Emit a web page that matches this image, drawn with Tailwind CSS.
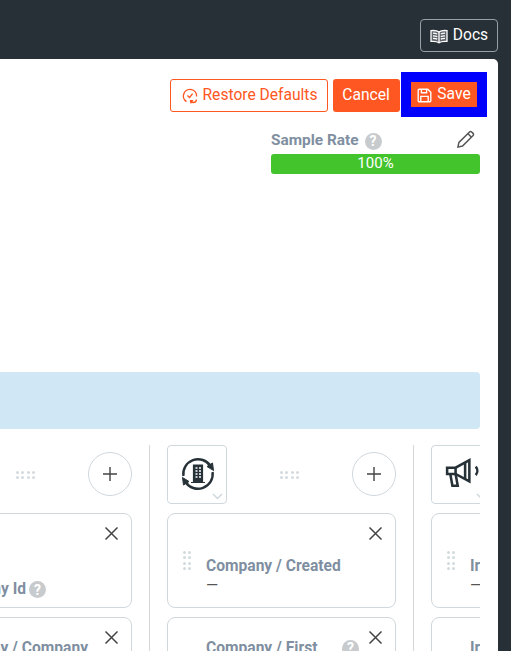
<!DOCTYPE html>
<html lang="en">

<head>
    <meta charset="UTF-8">
    <meta name="viewport" content="width=device-width, initial-scale=1.0">
    <title>Restore Defaults</title>
    <script src="https://cdn.jsdelivr.net/npm/@tailwindcss/browser@4"></script>
</head>

<body class="bg-[#272f37] h-[651px] overflow-hidden font-['Roboto',sans-serif]">
    <!-- top bar -->
    <header class="h-[59px] flex justify-end items-start pt-[19px] pr-[13px]">
        <button class="w-[78px] h-[33px] pt-[1px] border border-[#9a9fa4] rounded-[4px] text-white text-[15.6px] flex items-center justify-center gap-[5px]">
            <svg width="18" height="15" viewBox="0 0 18 15" fill="none" stroke="white" stroke-width="1.3">
                <path d="M9 3C7.5 1.8 4.5 1.3 1 1.6V12.4C4.5 12.1 7.5 12.6 9 13.8C10.5 12.6 13.5 12.1 17 12.4V1.6C13.5 1.3 10.5 1.8 9 3Z" fill="white" fill-opacity=".25"/>
                <path d="M9 3V13.8M3 4.2C4.5 4.2 6 4.4 7.2 5M3 6.8C4.5 6.8 6 7 7.2 7.6M3 9.4C4.5 9.4 6 9.6 7.2 10.2M15 4.2C13.5 4.2 12 4.4 10.8 5M15 6.8C13.5 6.8 12 7 10.8 7.6M15 9.4C13.5 9.4 12 9.6 10.8 10.2"/>
            </svg>
            Docs
        </button>
    </header>

    <div class="w-[498px] h-[592px] bg-white rounded-tr-[5px] overflow-hidden">
        <!-- actions -->
        <div class="flex justify-end items-start pt-[13px] pr-[11px] h-[58px]">
            <button class="w-[158px] h-[33px] mt-[7px] pt-[1px] pl-[1px] border border-[#ff5722] rounded-[3px] text-[#ff5722] text-[15.6px] flex items-center justify-center gap-[5px]">
                <svg width="16" height="16" viewBox="0 0 16 16" fill="none" stroke="#ff5722" stroke-width="1.4">
                    <path d="M4.5 13.6A6.6 6.6 0 1 1 14.6 8.5"/>
                    <path d="M5.4 7.4L7.6 9.4L10.6 5.6"/>
                    <path d="M14.4 11.4A3 3 0 0 1 8.8 13M9 15.4L8.6 12.8L11.2 12.8"/>
                </svg>
                Restore Defaults
            </button>
            <button class="w-[67px] h-[33px] mt-[7px] ml-[5px] pt-[1px] pr-[1px] bg-[#ff5722] rounded-[3px] text-white text-[15.6px]">Cancel</button>
            <div class="ml-[1px] w-[86px] h-[45px] bg-[#0000ff] flex items-center justify-center">
                <button class="w-[66px] h-[25px] pt-[1px] bg-[#ff5722] text-white text-[15.6px] flex items-center justify-center gap-[5px]">
                    <svg width="15" height="15" viewBox="0 0 15 15" fill="none" stroke="white" stroke-width="1.4">
                        <path d="M1.2 2.2A1 1 0 0 1 2.2 1.2H10.8L13.8 4.2V12.8A1 1 0 0 1 12.8 13.8H2.2A1 1 0 0 1 1.2 12.8Z"/>
                        <path d="M4.4 1.4V4.8H9.6V1.4M3.8 13.6V8.4H11.2V13.6"/>
                    </svg>
                    Save
                </button>
            </div>
        </div>

        <!-- sample rate -->
        <div class="ml-[271px] w-[209px] mt-[7px] h-[248px]">
            <div class="flex items-center h-[30px] pt-[4px] relative">
                <span class="text-[#7f8fa1] text-[15.4px] font-bold">Sample Rate</span>
                <span class="ml-[6px] w-[17px] h-[17px] rounded-full bg-[#c8cbce] text-white text-sm font-bold flex items-center justify-center">?</span>
                <svg class="ml-auto mr-[5px] mt-[-3px]" width="19" height="19" viewBox="0 0 18 18" fill="none" stroke="#555" stroke-width="1.4">
                    <path d="M1.8 16.2L2.8 11.8L12.8 1.8A1.4 1.4 0 0 1 14.8 1.8L16.2 3.2A1.4 1.4 0 0 1 16.2 5.2L6.2 15.2Z"/>
                    <path d="M11.2 3.4L14.6 6.8"/>
                </svg>
            </div>
            <div class="h-[20px] bg-[#43c32c] rounded-[3px] text-white text-[15px] leading-[19px] text-center">100%</div>
        </div>

        <!-- info -->
        <div class="w-[480px] h-[57px] bg-[#d0e8f5] rounded-r-[4px]"></div>

        <!-- columns -->
        <div class="w-[480px] overflow-hidden mt-[16px]">
            <div class="flex ml-[-114px] w-[800px] h-[206px]">
                <section class="w-[264px] shrink-0 border-r border-[#d5d8db] pl-[17px]">
                    <div class="w-[229px] h-[59px] flex items-center">
                        <div class="w-[60px] h-[59px]"></div>
                        <div class="mx-auto grid grid-cols-4 gap-[2px] w-[20px]">
                            <i class="size-[3px] rounded-full bg-[#d3dade]"></i><i class="size-[3px] rounded-full bg-[#d3dade]"></i><i class="size-[3px] rounded-full bg-[#d3dade]"></i><i class="size-[3px] rounded-full bg-[#d3dade]"></i>
                            <i class="size-[3px] rounded-full bg-[#d3dade]"></i><i class="size-[3px] rounded-full bg-[#d3dade]"></i><i class="size-[3px] rounded-full bg-[#d3dade]"></i><i class="size-[3px] rounded-full bg-[#d3dade]"></i>
                        </div>
                        <button class="w-[44px] h-[44px] rounded-full border border-[#cfd8dc] flex items-center justify-center mt-[-1px]">
                            <svg width="14" height="14" viewBox="0 0 14 14" stroke="#444" stroke-width="1.4"><path d="M7 0V14M0 7H14"/></svg>
                        </button>
                    </div>
                    <div class="relative w-[229px] h-[95px] mt-[9px] border border-[#cfd8dc] rounded-[8px]">
                        <div class="absolute top-[64px] right-[85px] text-[#7f8fa1] text-[15.6px] font-bold flex items-center whitespace-nowrap gap-[3px]">
                            Company / Company Id
                            <span class="w-[17px] h-[17px] rounded-full bg-[#c8cbce] text-white text-sm font-bold flex items-center justify-center shrink-0">?</span>
                        </div>
                        <svg class="absolute top-[13px] right-[13px]" width="13" height="13" viewBox="0 0 13 13" stroke="#444" stroke-width="1.5"><path d="M.5.5L12.5 12.5M12.5.5L.5 12.5"/></svg>
                    </div>
                    <div class="relative w-[229px] h-[95px] mt-[9px] border border-[#cfd8dc] rounded-[8px]">
                        <div class="text-[#7f8fa1] text-[15.6px] font-bold leading-[20px] top-[20px] whitespace-nowrap absolute right-[43px]">Company / Company</div>
                        <svg class="absolute top-[13px] right-[13px]" width="13" height="13" viewBox="0 0 13 13" stroke="#444" stroke-width="1.5"><path d="M.5.5L12.5 12.5M12.5.5L.5 12.5"/></svg>
                    </div>
                </section>

                <section class="w-[264px] shrink-0 border-r border-[#d5d8db] pl-[17px]">
                    <div class="w-[229px] h-[59px] flex items-center">
                        <div class="relative w-[60px] h-[59px] border border-[#cfd8dc] rounded-[4px] flex items-center justify-center">
                            <svg width="34" height="34" viewBox="0 0 34 34" fill="none" stroke="#263238" stroke-width="2.4" class="mt-[-2px] ml-[1px]">
                                <path d="M2.4 19A14.8 14.8 0 0 1 29.5 9"/>
                                <path d="M31.6 15A14.8 14.8 0 0 1 4.5 25"/>
                                <path d="M32.5 13.5L26 9.5L31.5 6Z M1.5 20.5L8 24.5L2.5 28Z" fill="#263238" stroke-width="1"/>
                                <path d="M10 25.5H24M12.5 25V8H21.5V25" fill="#263238" stroke-width="1.2"/>
                                <path d="M14.5 11H16.5M18 11H20M14.5 14H16.5M18 14H20M14.5 17H16.5M18 17H20M14.5 20H16.5M18 20H20" stroke="white" stroke-width="1.4"/>
                            </svg>
                            <svg class="absolute right-[3px] bottom-[3px]" width="11" height="7" viewBox="0 0 11 7" fill="none" stroke="#cfd8dc" stroke-width="1.5"><path d="M1 1L5.5 5.5L10 1"/></svg>
                        </div>
                        <div class="mx-auto grid grid-cols-4 gap-[2px] w-[20px]">
                            <i class="size-[3px] rounded-full bg-[#d3dade]"></i><i class="size-[3px] rounded-full bg-[#d3dade]"></i><i class="size-[3px] rounded-full bg-[#d3dade]"></i><i class="size-[3px] rounded-full bg-[#d3dade]"></i>
                            <i class="size-[3px] rounded-full bg-[#d3dade]"></i><i class="size-[3px] rounded-full bg-[#d3dade]"></i><i class="size-[3px] rounded-full bg-[#d3dade]"></i><i class="size-[3px] rounded-full bg-[#d3dade]"></i>
                        </div>
                        <button class="w-[44px] h-[44px] rounded-full border border-[#cfd8dc] flex items-center justify-center mt-[-1px]">
                            <svg width="14" height="14" viewBox="0 0 14 14" stroke="#444" stroke-width="1.4"><path d="M7 0V14M0 7H14"/></svg>
                        </button>
                    </div>
                    <div class="relative w-[229px] h-[95px] mt-[9px] border border-[#cfd8dc] rounded-[8px] flex">
                        <div class="grid grid-cols-2 gap-[2px] w-[8px] h-[19px] ml-[15px] mt-[37px]">
                            <i class="size-[3px] rounded-full bg-[#d3dade]"></i><i class="size-[3px] rounded-full bg-[#d3dade]"></i><i class="size-[3px] rounded-full bg-[#d3dade]"></i><i class="size-[3px] rounded-full bg-[#d3dade]"></i>
                            <i class="size-[3px] rounded-full bg-[#d3dade]"></i><i class="size-[3px] rounded-full bg-[#d3dade]"></i><i class="size-[3px] rounded-full bg-[#d3dade]"></i><i class="size-[3px] rounded-full bg-[#d3dade]"></i>
                        </div>
                        <div class="ml-[15px] mt-[42px]">
                            <div class="text-[#7f8fa1] text-[15.6px] font-bold leading-[20px]">Company / Created</div>
                            <div class="text-[#555] text-[15.6px] leading-[20px]">—</div>
                        </div>
                        <svg class="absolute top-[13px] right-[13px]" width="13" height="13" viewBox="0 0 13 13" stroke="#444" stroke-width="1.5"><path d="M.5.5L12.5 12.5M12.5.5L.5 12.5"/></svg>
                    </div>
                    <div class="relative w-[229px] h-[95px] mt-[9px] border border-[#cfd8dc] rounded-[8px]">
                        <div class="flex items-center ml-[38px] mt-[20px]">
                            <span class="text-[#7f8fa1] text-[15.6px] font-bold leading-[20px]">Company / First</span>
                            <span class="absolute left-[174px] w-[17px] h-[17px] rounded-full bg-[#c8cbce] text-white text-sm font-bold flex items-center justify-center">?</span>
                        </div>
                        <svg class="absolute top-[13px] right-[13px]" width="13" height="13" viewBox="0 0 13 13" stroke="#444" stroke-width="1.5"><path d="M.5.5L12.5 12.5M12.5.5L.5 12.5"/></svg>
                    </div>
                </section>

                <section class="w-[264px] shrink-0 pl-[17px]">
                    <div class="w-[229px] h-[59px] flex items-center">
                        <div class="relative w-[60px] h-[59px] border border-[#cfd8dc] rounded-[4px] flex items-center justify-start pl-[13px]">
                            <svg width="36" height="32" viewBox="0 0 34 30" fill="none" stroke="#263238" stroke-width="2.4" class="mt-[-2px]">
                                <path d="M2 9H10L23 2V22L10 15H2Z"/>
                                <path d="M10 9V15M19 4V20" />
                                <path d="M5 15L7 26H12L10 15"/>
                                <path d="M29 8A6 6 0 0 1 29 16"/>
                            </svg>
                            <svg class="absolute right-[3px] bottom-[3px]" width="11" height="7" viewBox="0 0 11 7" fill="none" stroke="#cfd8dc" stroke-width="1.5"><path d="M1 1L5.5 5.5L10 1"/></svg>
                        </div>
                    </div>
                    <div class="relative w-[229px] h-[95px] mt-[9px] border border-[#cfd8dc] rounded-[8px] flex">
                        <div class="grid grid-cols-2 gap-[2px] w-[8px] h-[19px] ml-[15px] mt-[37px]">
                            <i class="size-[3px] rounded-full bg-[#d3dade]"></i><i class="size-[3px] rounded-full bg-[#d3dade]"></i><i class="size-[3px] rounded-full bg-[#d3dade]"></i><i class="size-[3px] rounded-full bg-[#d3dade]"></i>
                            <i class="size-[3px] rounded-full bg-[#d3dade]"></i><i class="size-[3px] rounded-full bg-[#d3dade]"></i><i class="size-[3px] rounded-full bg-[#d3dade]"></i><i class="size-[3px] rounded-full bg-[#d3dade]"></i>
                        </div>
                        <div class="ml-[15px] mt-[42px]">
                            <div class="text-[#7f8fa1] text-[15.6px] font-bold leading-[20px]">Ir</div>
                            <div class="text-[#555] text-[15.6px] leading-[20px]">—</div>
                        </div>
                    </div>
                    <div class="relative w-[229px] h-[95px] mt-[9px] border border-[#cfd8dc] rounded-[8px]">
                        <div class="text-[#7f8fa1] text-[15.6px] font-bold leading-[20px] ml-[38px] mt-[20px]">Ir</div>
                    </div>
                </section>
            </div>
        </div>
    </div>
</body>

</html>
